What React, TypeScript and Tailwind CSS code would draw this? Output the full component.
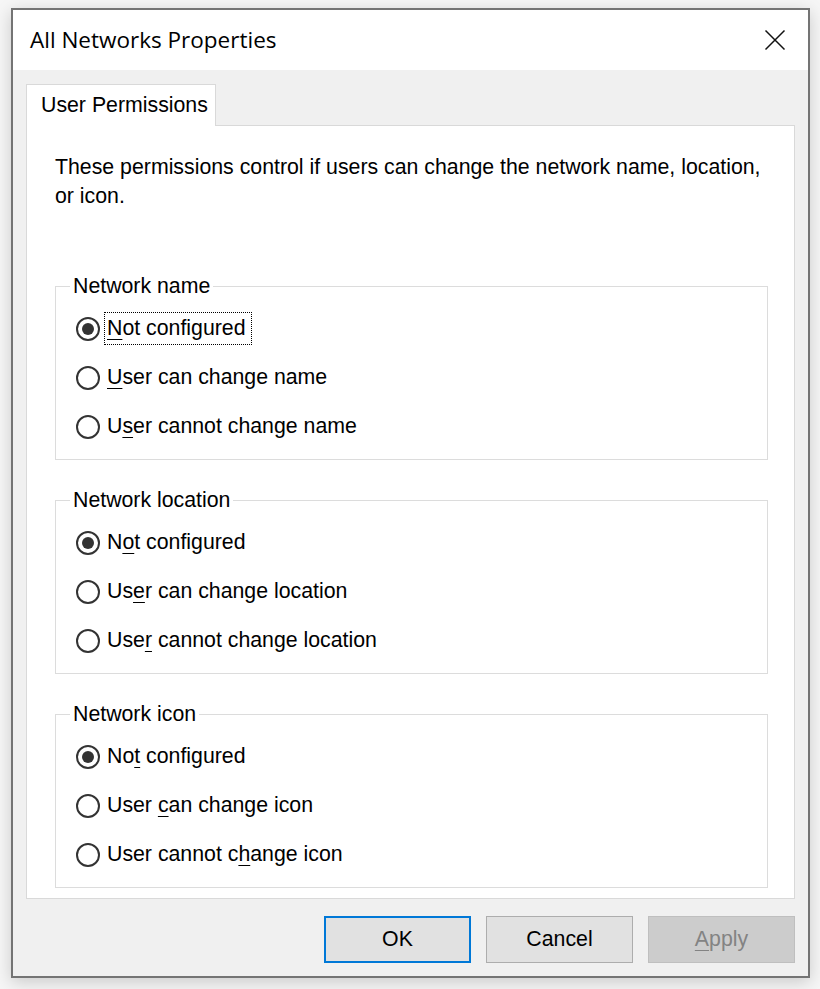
import type { ReactNode } from "react"

type Option = { pre: string; key: string; post: string; checked?: boolean; focused?: boolean }

const groups: { title: string; options: Option[] }[] = [
  {
    title: "Network name",
    options: [
      { pre: "", key: "N", post: "ot configured", checked: true, focused: true },
      { pre: "", key: "U", post: "ser can change name" },
      { pre: "U", key: "s", post: "er cannot change name" },
    ],
  },
  {
    title: "Network location",
    options: [
      { pre: "N", key: "o", post: "t configured", checked: true },
      { pre: "Us", key: "e", post: "r can change location" },
      { pre: "Use", key: "r", post: " cannot change location" },
    ],
  },
  {
    title: "Network icon",
    options: [
      { pre: "No", key: "t", post: " configured", checked: true },
      { pre: "User ", key: "c", post: "an change icon" },
      { pre: "User cannot c", key: "h", post: "ange icon" },
    ],
  },
]

function Mnemonic({ children }: { children: ReactNode }) {
  return <span className="underline decoration-1 underline-offset-[4px]">{children}</span>
}

function Radio({ option }: { option: Option }) {
  return (
    <div className="flex h-[49px] items-center pl-[20px]">
      <span className="flex h-[24px] w-[24px] shrink-0 items-center justify-center rounded-full border-2 border-[#333333] bg-white">
        {option.checked && <span className="h-[12px] w-[12px] rounded-full bg-[#333333]" />}
      </span>
      <span
        className={`ml-[5px] px-[2px] leading-[31px] ${
          option.focused ? "pr-[5px] outline outline-1 outline-dotted outline-black" : ""
        }`}
      >
        {option.pre}
        <Mnemonic>{option.key}</Mnemonic>
        {option.post}
      </span>
    </div>
  )
}

export default function App() {
  return (
    <div
      className="min-h-[989px] w-[820px] bg-[#f6f6f6] pl-[11px] pt-[8px] text-[21.3px] text-black"
      style={{ fontFamily: '"Liberation Sans", Arial, sans-serif' }}
    >
      <div className="flex h-[970px] w-[799px] flex-col border-2 border-[#747474] bg-[#f0f0f0] shadow-[0_4px_16px_rgba(0,0,0,0.18)]">
        {/* title bar */}
        <div className="flex h-[60px] shrink-0 items-center justify-between bg-white pl-[17px] pr-[20px]">
          <span className="text-[22.5px] leading-none" style={{ fontFamily: '"Open Sans", "Noto Sans", sans-serif' }}>
            All Networks Properties
          </span>
          <svg width="22" height="22" viewBox="0 0 22 22" className="mr-[2px]">
            <path d="M1.5 1.5 L20.5 20.5 M20.5 1.5 L1.5 20.5" stroke="#111" strokeWidth="1.5" />
          </svg>
        </div>

        {/* tabs */}
        <div className="flex flex-1 flex-col px-[13px] pt-[14px]">
          <div className="flex">
            <div className="relative z-10 -mb-px flex h-[42px] w-[190px] items-center border border-b-0 border-[#d9d9d9] bg-white pl-[14px]">
              User Permissions
            </div>
          </div>
          <div className="flex h-[774px] flex-col border border-[#d9d9d9] bg-white pl-[28px] pr-[26px] pt-[27px]">
            <p className="leading-[29px]">
              These permissions control if users can change the network name, location, or icon.
            </p>

            <div className="mt-[61px] flex flex-col gap-[26px]">
              {groups.map((g) => (
                <fieldset key={g.title} className="h-[188px] border border-[#dcdcdc]">
                  <legend className="ml-[14px] px-[3px] leading-[29px]">{g.title}</legend>
                  <div className="mt-[3px] flex flex-col">
                    {g.options.map((o, i) => (
                      <Radio key={i} option={o} />
                    ))}
                  </div>
                </fieldset>
              ))}
            </div>
          </div>

          {/* buttons */}
          <div className="mt-[17px] flex justify-end gap-[15px]">
            <button className="h-[47px] w-[147px] border-2 border-[#0078d7] bg-[#e1e1e1]">OK</button>
            <button className="h-[47px] w-[147px] border border-[#adadad] bg-[#e1e1e1]">Cancel</button>
            <button className="h-[47px] w-[147px] border border-[#bfbfbf] bg-[#cccccc] text-[#838383]">
              <Mnemonic>A</Mnemonic>pply
            </button>
          </div>
        </div>
      </div>
    </div>
  )
}
